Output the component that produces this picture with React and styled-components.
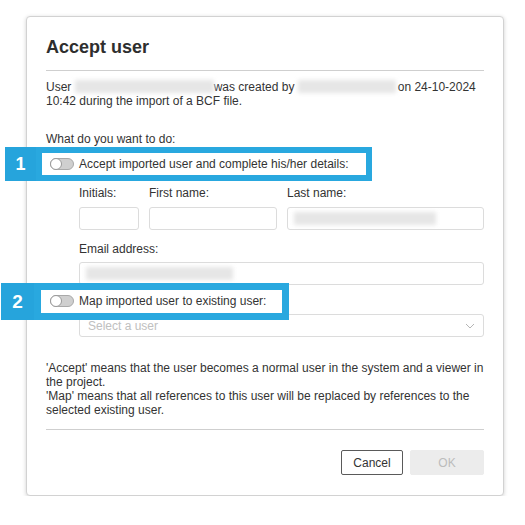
import React from 'react';
import styled, { createGlobalStyle } from 'styled-components';

const GlobalStyle = createGlobalStyle`
  html, body {
    margin: 0;
    padding: 0;
    background: #fff;
  }
  body {
    font-family: "Liberation Sans", Arial, sans-serif;
    color: #333;
  }
`;

const Page = styled.div`
  padding: 16px 0 0 26px;
`;

const Dialog = styled.div`
  width: 478px;
  box-sizing: border-box;
  padding: 20px 19px 20px 19px;
  background: #fff;
  border: 1px solid #d2d2d2;
  border-radius: 4px;
  box-shadow: 0 1px 4px rgba(0, 0, 0, 0.18);
  font-size: 12px;
  line-height: 14px;
`;

const Title = styled.h2`
  margin: 0;
  font-size: 18px;
  line-height: 20px;
  font-weight: 700;
  color: #2e2e2e;
`;

const Divider = styled.hr`
  margin: ${props => props.top}px 0 0 0;
  border: 0;
  border-top: 1px solid #cfcfcf;
  height: 0;
`;

const Text = styled.p`
  margin: ${props => props.top}px 0 0 0;
  white-space: nowrap;
`;

const Blur = styled.span`
  display: inline-block;
  width: ${props => props.w}px;
  height: 13px;
  vertical-align: -2px;
  background: #e6e6e6;
  filter: blur(2px);
  margin-right: ${props => props.mr || 0}px;
`;

const OptionRow = styled.div`
  position: relative;
  display: flex;
  align-items: center;
  gap: 5px;
  height: 14px;
  margin-top: ${props => props.top}px;
  padding-left: 4px;
`;

const Toggle = styled.span`
  position: relative;
  box-sizing: border-box;
  width: 24px;
  height: 12px;
  border-radius: 6px;
  background: #cfcfcf;
  border: 1px solid #a9a9a9;
  flex: none;

  &::after {
    content: '';
    position: absolute;
    left: -1px;
    top: -1px;
    box-sizing: border-box;
    width: 12px;
    height: 12px;
    border-radius: 50%;
    background: #fff;
    border: 1px solid #9a9a9a;
  }
`;

const Annotation = styled.div`
  position: absolute;
  left: ${props => props.left}px;
  top: ${props => props.top}px;
  width: ${props => props.w}px;
  height: ${props => props.h}px;
  box-sizing: border-box;
  border: ${props => props.bw}px solid #29a8df;
  pointer-events: none;
`;

const Badge = styled.span`
  position: absolute;
  right: calc(100% + ${props => props.bw}px);
  top: -${props => props.bw}px;
  bottom: -${props => props.bw}px;
  width: ${props => props.w}px;
  display: flex;
  align-items: center;
  justify-content: center;
  background: #26a4dc;
  color: #fff;
  font-size: ${props => props.size}px;
  font-weight: 700;
  font-family: "Liberation Sans", Arial, sans-serif;
`;

const Fields = styled.div`
  margin-left: 33px;
`;

const NameGrid = styled.div`
  display: grid;
  grid-template-columns: 60px 128px 1fr;
  column-gap: 10px;
  row-gap: 7px;
  margin-top: ${props => props.top}px;
`;

const Label = styled.label`
  display: block;
  margin-bottom: ${props => props.mb || 0}px;
`;

const Input = styled.div`
  box-sizing: border-box;
  height: 23px;
  border: 1px solid #dcdcdc;
  border-radius: 3px;
  background: #fff;
  display: flex;
  align-items: center;
  padding-left: 6px;
`;

const Select = styled(Input)`
  justify-content: space-between;
  padding: 0 8px;
  margin-top: ${props => props.top}px;
  color: #c0c0c0;
`;

const FieldBlock = styled.div`
  margin-top: ${props => props.top}px;
`;

const Footer = styled.div`
  display: flex;
  justify-content: flex-end;
  gap: 7px;
  margin-top: 20px;
`;

const Button = styled.button`
  box-sizing: border-box;
  height: 25px;
  width: ${props => props.w}px;
  border-radius: 2px;
  font-family: "Liberation Sans", Arial, sans-serif;
  font-size: 12px;
  padding: 0;
  background: ${props => (props.disabled ? '#ececec' : '#fff')};
  color: ${props => (props.disabled ? '#bcbcbc' : '#333')};
  border: 1px solid ${props => (props.disabled ? '#ececec' : '#5a5a5a')};
`;

const Chevron = () => (
  <svg width="10" height="6" viewBox="0 0 10 6" fill="none">
    <polyline points="1,1 5,5 9,1" stroke="#b5b5b5" strokeWidth="1" />
  </svg>
);

export default function App() {
  return (
    <>
      <GlobalStyle />
      <Page>
        <Dialog>
          <Title>Accept user</Title>
          <Divider top={13} />
          <Text top={9}>
            User <Blur w={139} />was created by <Blur w={98} mr={2} />on 24-10-2024
            <br />
            10:42 during the import of a BCF file.
          </Text>

          <Text top={24}>What do you want to do:</Text>

          <OptionRow top={11}>
            <Toggle />
            <span>Accept imported user and complete his/her details:</span>
            <Annotation left={-10} top={-10} w={336} h={34} bw={6}>
              <Badge bw={6} w={31} size={18}>1</Badge>
            </Annotation>
          </OptionRow>

          <Fields>
            <NameGrid top={15}>
              <Label>Initials:</Label>
              <Label>First name:</Label>
              <Label>Last name:</Label>
              <Input />
              <Input />
              <Input><Blur w={142} /></Input>
            </NameGrid>
            <FieldBlock top={12}>
              <Label mb={6}>Email address:</Label>
              <Input><Blur w={147} /></Input>
            </FieldBlock>
          </Fields>

          <OptionRow top={9}>
            <Toggle />
            <span>Map imported user to existing user:</span>
            <Annotation left={-12} top={-11} w={255} h={37} bw={7}>
              <Badge bw={7} w={33} size={19}>2</Badge>
            </Annotation>
          </OptionRow>

          <Fields>
            <Select top={6}>
              <span>Select a user</span>
              <Chevron />
            </Select>
          </Fields>

          <Text top={24}>
            'Accept' means that the user becomes a normal user in the system and a viewer in
            <br />
            the project.
            <br />
            'Map' means that all references to this user will be replaced by references to the
            <br />
            selected existing user.
          </Text>
          <Divider top={12} />

          <Footer>
            <Button w={62}>Cancel</Button>
            <Button w={74} disabled>OK</Button>
          </Footer>
        </Dialog>
      </Page>
    </>
  );
}
